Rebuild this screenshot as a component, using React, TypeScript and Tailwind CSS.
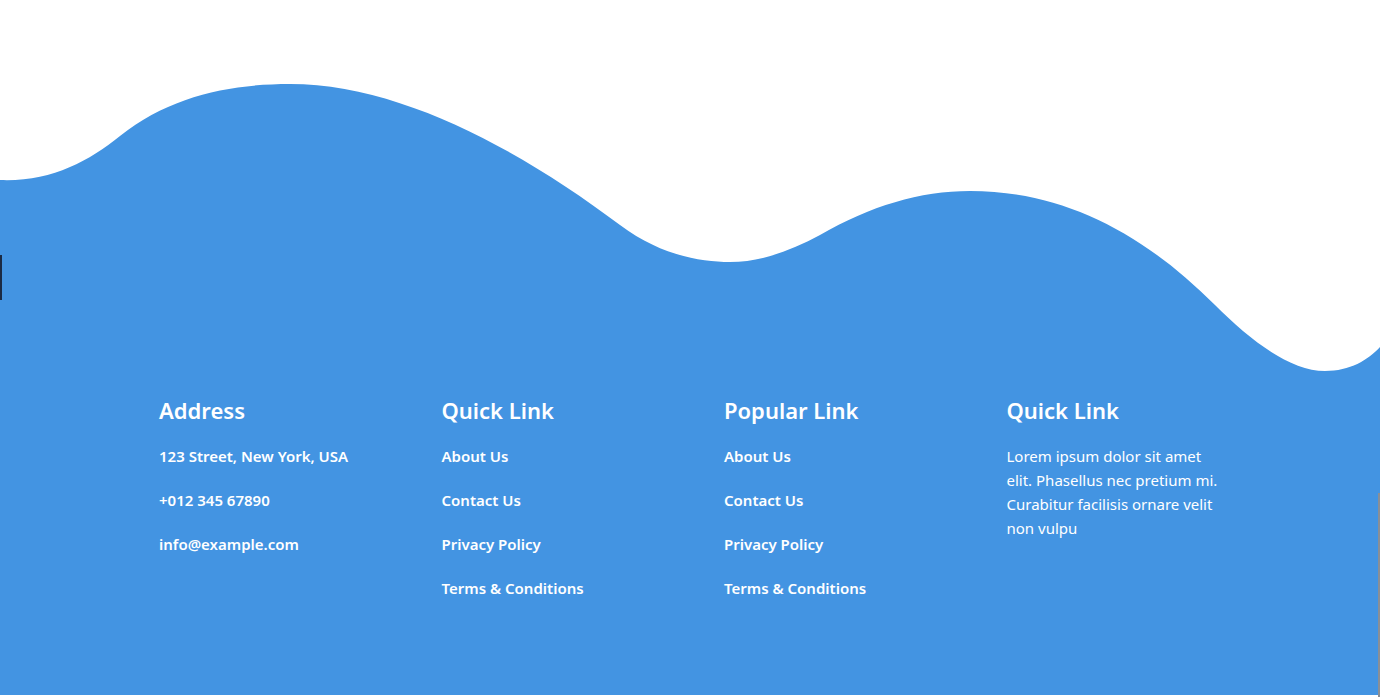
const quickLinks = ["About Us", "Contact Us", "Privacy Policy", "Terms & Conditions"]

const FooterHeading = ({ children }: { children: React.ReactNode }) => (
  <h4 className="text-[22px] font-semibold leading-[28px] text-white">{children}</h4>
)

const FooterLinks = ({ items }: { items: string[] }) => (
  <ul className="mt-[20px] flex flex-col gap-[20px]">
    {items.map((item) => (
      <li key={item}>
        <a href="#" className="block text-[15px] font-semibold leading-[24px] text-white">
          {item}
        </a>
      </li>
    ))}
  </ul>
)

const App = () => {
  return (
    <div
      className="relative h-[697px] w-[1382px] overflow-hidden bg-white"
      style={{ fontFamily: '"Noto Sans", "Open Sans", sans-serif' }}
    >
      {/* wave */}
      <svg className="block h-[380px] w-[1380px]" viewBox="0 0 1380 380" preserveAspectRatio="none">
        <path
          fill="#4394e2"
          d="M0,180 C50,182 88,162 120,136 C170,96 230,84 290,84 C400,84 520,150 620,225 C660,255 700,262 730,262 C762,262 792,250 820,235 C870,206 920,191 970,191 C1060,191 1140,230 1215,305 C1250,340 1290,371 1325,371 C1350,371 1368,360 1380,347 L1380,380 L0,380 Z"
        />
      </svg>

      <footer className="h-[315px] w-[1380px] bg-[#4394e2] pl-[159px] pt-[16px]">
        <div className="grid grid-cols-[282.5px_282.5px_282.5px_282.5px]">
          <div>
            <FooterHeading>Address</FooterHeading>
            <ul className="mt-[20px] flex flex-col gap-[20px] text-[15px] font-semibold leading-[24px] text-white">
              <li>123 Street, New York, USA</li>
              <li>+012 345 67890</li>
              <li>info@example.com</li>
            </ul>
          </div>
          <div>
            <FooterHeading>Quick Link</FooterHeading>
            <FooterLinks items={quickLinks} />
          </div>
          <div>
            <FooterHeading>Popular Link</FooterHeading>
            <FooterLinks items={quickLinks} />
          </div>
          <div>
            <FooterHeading>Quick Link</FooterHeading>
            <p className="mt-[20px] w-[215px] text-[15px] leading-[24px] text-white">
              Lorem ipsum dolor sit amet elit. Phasellus nec pretium mi. Curabitur facilisis ornare velit non vulpu
            </p>
          </div>
        </div>
      </footer>

      {/* left edge marker and right scroll strip */}
      <div className="absolute left-0 top-[255px] h-[45px] w-[2px] bg-[#1b2b45]" />
      <div className="absolute right-[2px] top-[493px] h-[204px] w-[2px] bg-[#8a8f96]" />
    </div>
  )
}

export default App
